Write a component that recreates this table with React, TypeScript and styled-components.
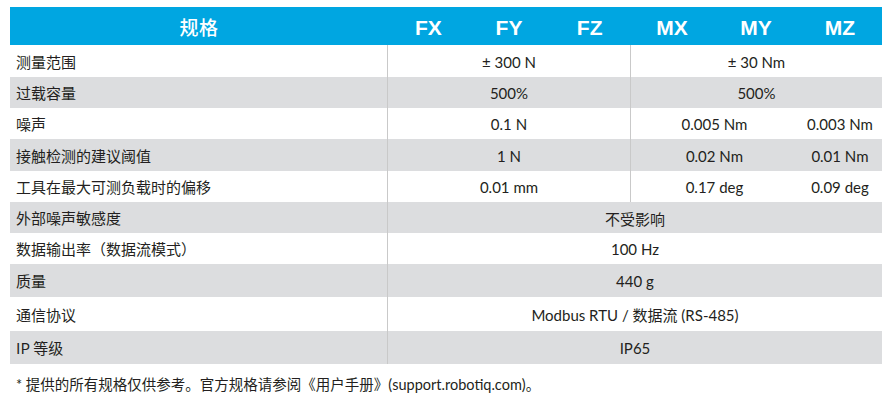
import React from "react";
import styled, { createGlobalStyle } from "styled-components";

const Global = createGlobalStyle`
  html, body { margin: 0; padding: 0; background: #ffffff; }
  body { font-family: "Lato", "Noto Sans CJK SC", sans-serif; color: #231f20; }
`;

const Page = styled.div`
  width: 888px;
  height: 402px;
  padding: 7px 6px 0 10px;
  box-sizing: border-box;
`;

const COLS = "378px repeat(3, 80.67px) repeat(3, 84px)";

const Header = styled.div`
  display: grid;
  grid-template-columns: ${COLS};
  height: 38px;
  background: #00a6e1;
  color: #ffffff;
  align-items: center;
`;

const HeadTitle = styled.div`
  text-align: center;
  font-family: "Noto Sans CJK SC", sans-serif;
  font-size: 19px;
  font-weight: 500;
  letter-spacing: 0.5px;
`;

const HeadAxis = styled.div`
  text-align: center;
  font-family: "Liberation Sans", Arial, sans-serif;
  font-size: 21px;
  font-weight: 700;
  padding-top: 3px;
`;

const Row = styled.div<{ $grey: boolean; $h: number }>`
  display: grid;
  grid-template-columns: ${COLS};
  height: ${(p) => p.$h}px;
  background: ${(p) => (p.$grey ? "#dcdddf" : "#ffffff")};
`;

const Label = styled.div`
  display: flex;
  align-items: center;
  padding-left: 6px;
  font-family: "Noto Sans CJK SC", sans-serif;
  font-size: 15px;
  color: #231f20;
  border-right: 1.5px solid #c9c9c9;
`;

const Value = styled.div<{ $span: number; $divider?: boolean }>`
  grid-column: span ${(p) => p.$span};
  display: flex;
  align-items: center;
  justify-content: center;
  font-family: "Lato", "Noto Sans CJK SC", sans-serif;
  font-size: 15px;
  color: #231f20;
  padding-top: 1px;
  border-left: ${(p) => (p.$divider ? "1.5px solid #c9c9c9" : "none")};
  box-sizing: border-box;
`;

const Footnote = styled.div`
  padding: 9px 0 0 6px;
  font-family: "Lato", "Noto Sans CJK SC", sans-serif;
  font-size: 14.5px;
  color: #231f20;
`;

type Cell = { text: string; span: number; divider?: boolean };
type RowData = { label: string; h: number; cells: Cell[] };

const rows: RowData[] = [
  { label: "测量范围", h: 32, cells: [{ text: "± 300 N", span: 3 }, { text: "± 30 Nm", span: 3, divider: true }] },
  { label: "过载容量", h: 31, cells: [{ text: "500%", span: 3 }, { text: "500%", span: 3, divider: true }] },
  { label: "噪声", h: 31, cells: [{ text: "0.1 N", span: 3 }, { text: "0.005 Nm", span: 2, divider: true }, { text: "0.003 Nm", span: 1 }] },
  { label: "接触检测的建议阈值", h: 32, cells: [{ text: "1 N", span: 3 }, { text: "0.02 Nm", span: 2, divider: true }, { text: "0.01 Nm", span: 1 }] },
  { label: "工具在最大可测负载时的偏移", h: 31, cells: [{ text: "0.01 mm", span: 3 }, { text: "0.17 deg", span: 2, divider: true }, { text: "0.09 deg", span: 1 }] },
  { label: "外部噪声敏感度", h: 31, cells: [{ text: "不受影响", span: 6 }] },
  { label: "数据输出率（数据流模式）", h: 31, cells: [{ text: "100 Hz", span: 6 }] },
  { label: "质量", h: 33, cells: [{ text: "440 g", span: 6 }] },
  { label: "通信协议", h: 34, cells: [{ text: "Modbus RTU / 数据流 (RS-485)", span: 6 }] },
  { label: "IP 等级", h: 33, cells: [{ text: "IP65", span: 6 }] },
];

const axes = ["FX", "FY", "FZ", "MX", "MY", "MZ"];

export default function App() {
  return (
    <>
      <Global />
      <Page>
        <Header>
          <HeadTitle>规格</HeadTitle>
          {axes.map((a) => (
            <HeadAxis key={a}>{a}</HeadAxis>
          ))}
        </Header>
        {rows.map((r, i) => (
          <Row key={r.label} $grey={i % 2 === 1} $h={r.h}>
            <Label>{r.label}</Label>
            {r.cells.map((c, j) => (
              <Value key={j} $span={c.span} $divider={c.divider}>
                {c.text}
              </Value>
            ))}
          </Row>
        ))}
        <Footnote>* 提供的所有规格仅供参考。官方规格请参阅《用户手册》(support.robotiq.com)。</Footnote>
      </Page>
    </>
  );
}
